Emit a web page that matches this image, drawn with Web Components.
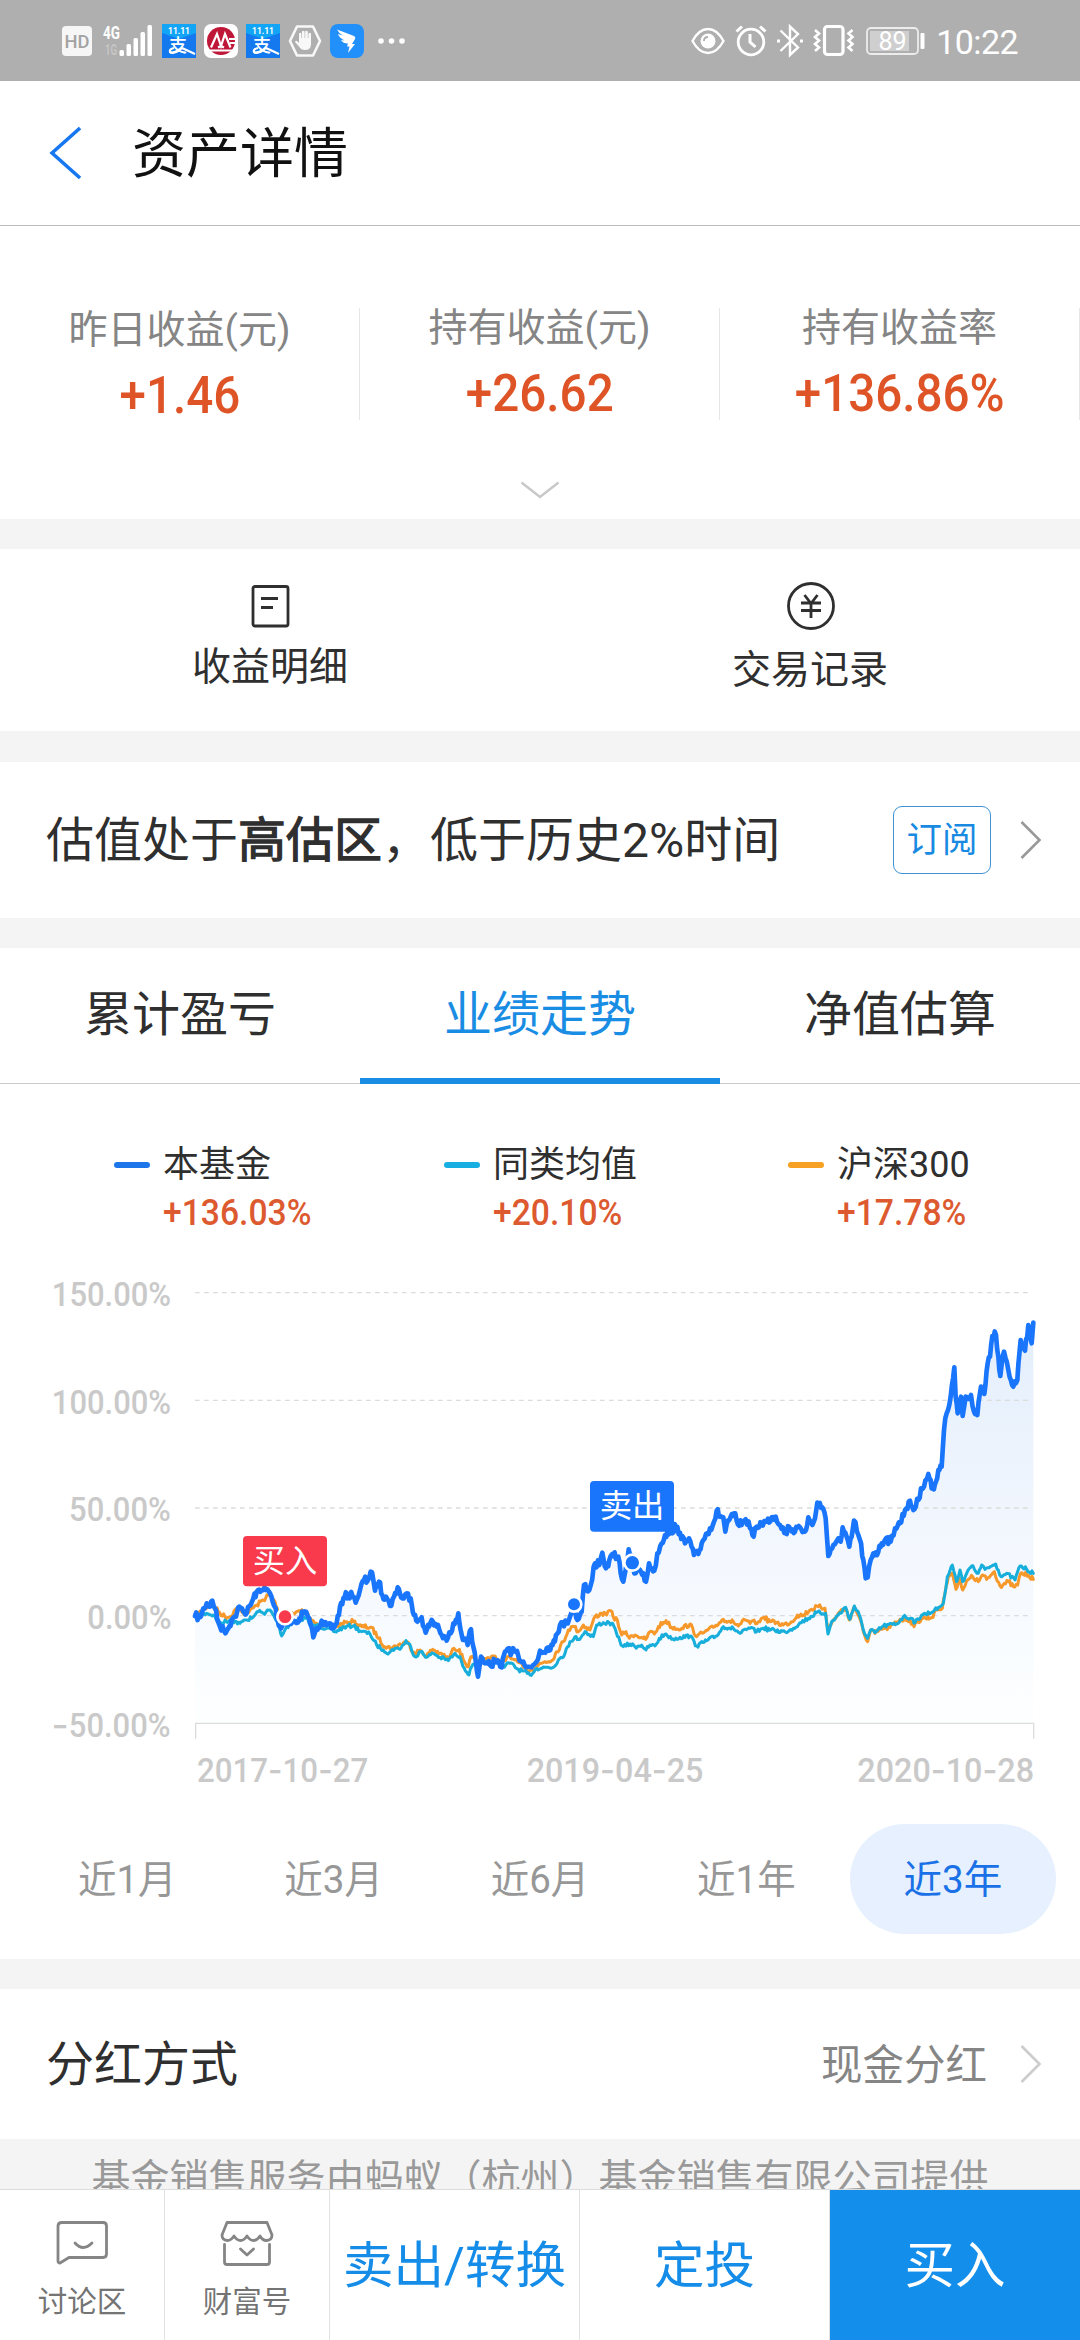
<!DOCTYPE html>
<html lang="zh-CN">
<head>
<meta charset="utf-8">
<meta name="viewport" content="width=1080">
<title>资产详情</title>
<style>
  html, body { margin: 0; padding: 0; }
  body {
    width: 1080px;
    height: 2340px;
    overflow: hidden;
    background: #f4f4f4;
    color: #2f2f2f;
    font-family: Roboto, "Noto Sans CJK SC", sans-serif;
  }
</style>
</head>
<body>
<asset-page></asset-page>

<script>
/* ============================================================
   HELPER: define()
   ============================================================
   Registers a custom element whose markup never changes.
   The template is cloned into an open shadow root.
   ============================================================ */
function define(name, html) {
  const template = document.createElement('template');
  template.innerHTML = html;
  customElements.define(name, class extends HTMLElement {
    constructor() {
      super();
      this.attachShadow({ mode: 'open' });
      this.shadowRoot.appendChild(template.content.cloneNode(true));
    }
  });
}

/* ============================================================
   <status-bar> : phone status bar, icons left and right
   ============================================================ */
const payIcon = `
  <svg width="34" height="34" viewBox="0 0 34 34">
    <rect width="34" height="34" fill="#1478ee"/>
    <path d="M0 0h34v9L17 15 0 9z" fill="#12a5f5"/>
    <text x="17" y="9.500" font-size="8.500" font-weight="700" text-anchor="middle" fill="#fff">11.11</text>
    <text x="16" y="28" font-size="18" font-weight="500" text-anchor="middle" fill="#fff">支</text>
    <path d="M12 24q-5 1-4 4 4 3 12-4M20 24l13 6" fill="none" stroke="#fff" stroke-width="2.200"/>
  </svg>`;

define('status-bar', `
<style>
  :host {
    display: flex;
    justify-content: space-between;
    height: 81px;
    padding: 0 62px;
    background: #afafaf;
    color: #fff;
    box-sizing: border-box;
  }
  div { display: flex; align-items: center; }
  svg { display: block; flex-shrink: 0; }
  .left { gap: 8px; }
  .right { gap: 10px; }
  .time { font-size: 34px; line-height: 40px; letter-spacing: -.6px; margin: 2px 0 0 1px; }
</style>
<div class="left">
  <svg width="30" height="30" viewBox="0 0 30 30">
    <rect width="30" height="30" rx="4" fill="#f6f6f6"/>
    <text x="15" y="22" font-size="19" font-weight="500" text-anchor="middle" fill="#a3a3a3" textLength="25" lengthAdjust="spacingAndGlyphs">HD</text>
  </svg>
  <svg width="54" height="34" viewBox="0 0 54 34">
    <text x="3" y="15" font-size="18" font-weight="700" fill="#fff" textLength="17" lengthAdjust="spacingAndGlyphs">4G</text>
    <text x="5" y="31" font-size="14" font-weight="700" fill="#c6c6c6" textLength="12" lengthAdjust="spacingAndGlyphs">1G</text>
    <g fill="#fff">
      <rect x="19.500" y="26" width="4.500" height="6" rx="1.500"/>
      <rect x="26.500" y="20" width="4.500" height="12" rx="1.500"/>
      <rect x="33.500" y="14" width="4.500" height="18" rx="1.500"/>
      <rect x="40.500" y="8" width="4.500" height="24" rx="1.500"/>
      <rect x="47.500" y="1" width="4.500" height="31" rx="1.500"/>
    </g>
  </svg>
  ${payIcon}
  <svg width="34" height="34" viewBox="0 0 34 34">
    <rect width="34" height="34" rx="7" fill="#fff"/>
    <circle cx="17" cy="17" r="14" fill="#bf1737"/>
    <path d="M7 23.500 13 10l4 12 4-12 5.500 13.500M17 22l-3 1.500M17 22l3 1.500M5 26.500h24" fill="none" stroke="#fff" stroke-width="2.200"/>
    <path d="M25 15h7M26 19h6" stroke="#fff" stroke-width="1.800"/>
  </svg>
  ${payIcon}
  <svg width="34" height="34" viewBox="0 0 34 34">
    <path d="M9 2.500h16L32 17l-7 14.500H9L2 17z" fill="none" stroke="#f8f8f8" stroke-width="2.600" stroke-linejoin="round"/>
    <path d="M11 15V9.500q1.200-1.500 2.400 0V14h.6V7.500q1.300-1.500 2.600 0V14h.6V7.500q1.300-1.500 2.600 0V14h.6V9.500q1.300-1.500 2.600 0V20q0 6-6 6-4 0-6-3.500L7 18q.8-2 2.600-.6L11 19z" fill="#f8f8f8"/>
  </svg>
  <svg width="34" height="34" viewBox="0 0 34 34">
    <rect width="34" height="34" rx="8" fill="#2290fb"/>
    <path d="M7 5.500 24 12q2 1 1 3l-3 5h3l-7 9 1.500-6.500H17l1-3q-5 0-7-3.500l3.500.5Q9 13.500 8 10l5 1.500Q8.500 9 7 5.500z" fill="#fff"/>
  </svg>
  <svg width="36" height="34" viewBox="0 0 36 34" fill="#fff">
    <circle cx="9" cy="17" r="2.800"/><circle cx="19.500" cy="17" r="2.800"/><circle cx="30" cy="17" r="2.800"/>
  </svg>
</div>
<div class="right">
  <svg width="34" height="34" viewBox="0 0 34 34">
    <path d="M1.500 17Q8 5 17 5t15.500 12Q26 29 17 29T1.500 17z" fill="none" stroke="#fff" stroke-width="2.400"/>
    <circle cx="17" cy="17" r="7.500" fill="#fff"/>
    <path d="M13 17q0-4 4-4" fill="none" stroke="#afafaf" stroke-width="1.800"/>
  </svg>
  <svg width="32" height="34" viewBox="0 0 32 34" fill="none" stroke="#fff">
    <circle cx="16" cy="18" r="12.800" stroke-width="2.800"/>
    <path d="M15 10v8l5.500 5" stroke-width="3"/>
    <path d="M1.500 7.500 7 2.500M30.500 7.500 25 2.500" stroke-width="3"/>
  </svg>
  <svg width="26" height="34" viewBox="0 0 26 34" fill="none" stroke="#fff" stroke-width="2.400">
    <path d="M3.500 6.500 21 23.500l-8 7.500V2.500l8 7.500L3.500 27"/>
    <path d="M0 17h3M23 17h3" stroke-width="3"/>
  </svg>
  <svg width="42" height="34" viewBox="0 0 42 34" fill="none" stroke="#fff">
    <rect x="11.500" y="2.500" width="18.500" height="28" rx="3" stroke-width="3.200"/>
    <path d="M2 6l4 3.500-4 3.500 4 3.500-4 3.500 4 3.500-4 3.500M39.500 6l-4 3.500 4 3.500-4 3.500 4 3.500-4 3.500 4 3.500" stroke-width="2.600"/>
  </svg>
  <svg width="60" height="34" viewBox="0 0 60 34">
    <rect x="2" y="4" width="51" height="26" rx="4" fill="none" stroke="#ececec" stroke-width="1.800"/>
    <rect x="5" y="7" width="39" height="20" fill="#cfcfcf"/>
    <rect x="55.500" y="9" width="4" height="16" rx="1" fill="#fff"/>
    <text x="27.500" y="25.500" font-size="25" text-anchor="middle" fill="#fff">89</text>
  </svg>
  <span class="time">10:22</span>
</div>
`);

/* ============================================================
   <title-bar> : back arrow and page title
   ============================================================ */
define('title-bar', `
<style>
  :host {
    display: flex;
    align-items: center;
    gap: 51px;
    height: 145px;
    padding-left: 49px;
    border-bottom: 1px solid #bbb;
    background: #fff;
    box-sizing: border-box;
  }
  span { font-size: 54px; line-height: 60px; color: #111; padding-top: 3px; }
</style>
<svg width="32" height="54" viewBox="0 0 32 54" fill="none" stroke="#1677f0" stroke-width="3.500">
  <path d="M31 2 3 27l28 25"/>
</svg>
<span><slot></slot></span>
`);

/* ============================================================
   <stat-cell> : label and orange number
   ============================================================ */
define('stat-cell', `
<style>
  :host {
    display: flex;
    flex-direction: column;
    align-items: center;
    height: 112px;
    border-right: 1px solid #e6e6e6;
    box-sizing: border-box;
  }
  .label { font-size: 39px; line-height: 40px; color: #858585; padding-top: var(--shift, 0px); }
  .value {
    font-size: 52px;
    line-height: 60px;
    font-weight: 500;
    color: #de5426;
    margin-top: 16px;
    transform: scaleX(.915);
  }
</style>
<span class="label"><slot name="label"></slot></span>
<span class="value"><slot></slot></span>
`);

/* ============================================================
   <entry-link> : icon over a caption
   ============================================================ */
define('entry-link', `
<style>
  :host { display: flex; flex-direction: column; align-items: center; color: #2f2f2f; }
  span { font-size: 39px; line-height: 46px; }
</style>
<slot name="icon"></slot>
<span><slot></slot></span>
`);

/* ============================================================
   <arrow-right> : chevron at the end of a row
   ============================================================ */
define('arrow-right', `
<style>
  :host { display: block; width: 22px; height: 40px; color: #999; }
  svg { display: block; }
</style>
<svg width="22" height="40" viewBox="0 0 22 40" fill="none" stroke="currentColor" stroke-width="2.600">
  <path d="M1.500 2 19.500 20 1.500 38"/>
</svg>
`);

/* ============================================================
   <tab-item> : attribute "active" adds colour and underline
   ============================================================ */
define('tab-item', `
<style>
  :host {
    display: flex;
    justify-content: center;
    height: 136px;
    font-size: 48px;
    line-height: 134px;
    border-bottom: 6px solid transparent;
    box-sizing: border-box;
  }
  :host([active]) { color: #198ce3; border-color: #198ce3; }
</style>
<slot></slot>
`);

/* ============================================================
   <legend-item> : --mark sets the colour of the dash
   ============================================================ */
define('legend-item', `
<style>
  :host { display: grid; grid-template-columns: 49px auto; align-items: center; justify-content: start; }
  i { width: 36px; height: 6px; border-radius: 3px; background: var(--mark); }
  .name { font-size: 36px; line-height: 48px; color: #2f2f2f; }
  .value {
    grid-column: 2;
    font-size: 36px;
    line-height: 48px;
    font-weight: 500;
    color: #dd5a30;
    transform: scaleX(.935);
    transform-origin: left;
    justify-self: start;
  }
</style>
<i></i><span class="name"><slot></slot></span>
<span class="value"><slot name="value"></slot></span>
`);

/* ============================================================
   <trend-chart> : performance lines with buy / sell tags
   ============================================================
   Points are "x,y" pairs in chart units, three units per pixel.
   ============================================================ */
const FUND = '45,1008 60,1012 70,985 80,970 90,980 97,962 105,985 112,1020 120,1040 132,1052 145,1045 155,1020 168,1010 178,980 190,995 200,1000 212,975 220,955 230,935 245,930 258,930 270,940 278,965 287,985 293,1020 303,1045 315,1020 330,1030 345,1025 358,1015 370,1000 383,1008 392,1035 400,1072 408,1045 425,1022 440,1035 455,1045 470,1030 480,980 490,955 505,942 518,950 527,968 540,930 552,900 563,902 572,875 580,900 585,932 597,905 607,945 618,950 630,978 642,950 653,922 667,955 680,940 692,955 702,1005 712,1025 725,1012 737,1058 755,1020 770,1040 785,1065 800,1082 812,1060 820,1030 835,1000 842,1050 852,1080 863,1095 873,1048 880,1100 888,1150 894,1190 903,1130 915,1150 930,1155 945,1142 965,1162 975,1115 985,1105 992,1125 1003,1112 1015,1128 1030,1145 1055,1162 1070,1145 1080,1112 1100,1105 1118,1095 1128,1065 1140,1035 1160,1030 1170,1010 1182,975 1192,1020 1205,995 1212,915 1228,930 1245,850 1258,855 1267,818 1278,865 1288,840 1300,828 1315,830 1322,880 1330,905 1340,850 1346,808 1357,848 1363,880 1380,870 1390,880 1398,905 1407,850 1423,872 1432,820 1445,790 1455,765 1470,755 1488,740 1500,758 1515,790 1527,775 1542,825 1555,822 1565,790 1578,762 1590,745 1602,725 1610,692 1620,710 1630,712 1636,755 1648,720 1662,700 1670,722 1685,735 1697,718 1710,745 1721,770 1730,740 1745,730 1760,725 1775,712 1787,710 1800,735 1817,760 1827,740 1845,755 1860,742 1875,755 1885,712 1897,735 1905,715 1912,668 1927,682 1937,715 1945,828 1960,795 1972,780 1982,785 1988,742 2000,770 2008,800 2015,770 2022,722 2035,765 2040,780 2050,840 2057,895 2063,892 2072,840 2080,820 2095,815 2105,790 2118,775 2132,785 2145,745 2160,730 2175,690 2190,662 2200,690 2215,660 2223,625 2232,620 2245,582 2255,625 2265,612 2275,570 2285,560 2292,450 2300,400 2312,350 2323,262 2327,350 2333,400 2343,350 2348,408 2357,350 2373,345 2382,395 2392,405 2403,320 2413,342 2423,250 2430,230 2437,168 2448,165 2455,230 2461,288 2472,215 2485,270 2500,320 2512,300 2522,180 2535,212 2545,135 2555,190 2560,128';
const INDEX = '45,1010 75,985 97,970 115,995 135,1010 150,1010 170,985 190,1000 210,990 230,975 250,960 265,945 285,965 295,1000 303,1040 325,1005 345,1000 358,992 380,1000 395,1025 410,1030 440,1035 470,1040 500,1025 520,1025 545,1040 575,1042 595,1075 615,1100 635,1105 655,1095 680,1085 705,1120 720,1110 740,1128 758,1108 780,1120 805,1135 822,1105 838,1108 850,1140 865,1160 873,1130 890,1150 920,1135 942,1128 965,1155 985,1130 1005,1140 1030,1162 1050,1172 1075,1155 1095,1145 1115,1142 1130,1115 1150,1085 1165,1050 1182,1040 1195,1055 1210,1035 1230,1050 1245,1010 1265,1000 1280,1005 1292,992 1300,1012 1312,1020 1325,1065 1338,1055 1348,1075 1365,1065 1385,1072 1397,1078 1410,1055 1423,1062 1435,1040 1458,1022 1475,1042 1505,1045 1530,1032 1550,1070 1575,1055 1600,1042 1630,1018 1660,1025 1675,1038 1695,1020 1710,1030 1735,1025 1752,1012 1770,1025 1790,1028 1810,1035 1835,1025 1852,1005 1870,1005 1890,990 1915,980 1935,985 1944,1050 1960,1020 1980,995 1997,985 2008,1020 2023,980 2037,1010 2050,1055 2063,1085 2072,1050 2085,1060 2105,1048 2130,1042 2160,1018 2190,1020 2202,1040 2225,1015 2255,1012 2270,990 2287,985 2298,920 2305,890 2317,880 2328,928 2338,895 2348,930 2363,900 2378,890 2395,905 2407,885 2420,898 2443,875 2460,918 2485,905 2500,920 2513,915 2522,880 2545,885 2560,898';
const PEERS = '45,1010 80,1000 100,1005 120,1030 150,1020 180,1030 195,1020 215,1015 235,995 250,1000 270,990 285,1015 295,1030 305,1068 320,1040 345,1025 375,1015 400,1035 440,1045 465,1055 500,1038 520,1038 545,1055 570,1062 590,1095 610,1110 628,1118 645,1105 660,1108 678,1082 692,1100 705,1130 722,1115 740,1132 760,1120 780,1132 805,1142 825,1120 840,1130 853,1165 867,1185 875,1160 895,1150 940,1145 965,1160 990,1150 1015,1168 1050,1185 1070,1165 1095,1162 1120,1162 1135,1140 1155,1120 1170,1085 1185,1070 1195,1078 1215,1055 1240,1070 1250,1035 1270,1028 1295,1030 1305,1045 1320,1085 1330,1100 1350,1092 1365,1100 1385,1095 1398,1110 1410,1095 1425,1098 1438,1075 1458,1062 1475,1078 1500,1072 1530,1068 1550,1098 1580,1082 1610,1068 1630,1040 1660,1045 1680,1060 1710,1045 1730,1055 1750,1045 1785,1052 1815,1055 1840,1045 1860,1028 1885,1015 1910,998 1937,1000 1944,1062 1955,1025 1975,1005 1997,982 2010,1018 2023,978 2038,1005 2050,1050 2063,1075 2072,1050 2085,1058 2110,1038 2150,1032 2170,1010 2195,1015 2205,1028 2225,1005 2260,995 2290,970 2302,890 2317,855 2330,905 2340,870 2348,905 2360,880 2375,858 2395,880 2405,855 2415,868 2447,852 2463,890 2480,880 2505,900 2520,858 2540,868 2560,880';

// Puts a small daily wobble between the given points
function daily(points, amp) {
  const p = points.split(' ').map(s => s.split(',').map(Number));
  let seed = 7, out = [p[0].join(',')];
  for (let i = 1; i < p.length; i++) {
    const [x0, y0] = p[i - 1], [x1, y1] = p[i];
    const n = Math.max(1, Math.round((x1 - x0) / 4));
    for (let k = 1; k <= n; k++) {
      seed = (seed * 16807) % 2147483647;
      const j = k < n ? (seed / 2147483647 - .5) * 2 * amp : 0;
      out.push((x0 + (x1 - x0) * k / n).toFixed(1) + ',' + (y0 + (y1 - y0) * k / n + j).toFixed(1));
    }
  }
  return out.join(' ');
}

class TrendChart extends HTMLElement {
  constructor() {
    super();
    this.attachShadow({ mode: 'open' });
  }

  connectedCallback() {
    const fund = daily(FUND, 12);
    // Thin hyphens get a wider glyph from Inter
    const wide = s => s.replace(/-/g, '<i>-</i>');
    const scale = ['150.00%', '100.00%', '50.00%', '0.00%', '-50.00%'];
    const dates = ['2017-10-27', '2019-04-25', '2020-10-28'];

    this.shadowRoot.innerHTML = `
<style>
  :host {
    display: grid;
    grid-template-columns: 171px 900px;
    column-gap: 9px;
    height: 540px;
    color: #c9c9c9;
    font-size: 34px;
    font-weight: 500;
  }
  i { font-family: Inter, sans-serif; font-style: normal; }
  .scale { display: flex; flex-direction: column; align-items: flex-end; padding-top: 1px; }
  .scale span { line-height: 107.600px; transform: scaleX(.91); transform-origin: right; }
  .scale i { display: inline-block; transform: scaleX(1.200); transform-origin: right; }
  .plot { display: flex; flex-direction: column; }
  svg { display: block; }
  .dates { display: flex; justify-content: space-between; width: 837px; padding-left: 17px; }
  .dates span { line-height: 40px; transform: scaleX(.95); }
  .dates span:first-child { transform: scaleX(.92); transform-origin: left; }
  .dates span:last-child { transform-origin: right; }
</style>
<div class="scale">${scale.map(s => `<span>${wide(s)}</span>`).join('')}</div>
<div class="plot">
  <svg width="900" height="510" viewBox="0 -120 2700 1530">
    <defs>
      <linearGradient id="fill" gradientUnits="userSpaceOnUse" x1="0" y1="128" x2="0" y2="1330">
        <stop offset="0" stop-color="#e3eefb"/>
        <stop offset=".55" stop-color="#f3f7fe"/>
        <stop offset="1" stop-color="#fdffff"/>
      </linearGradient>
    </defs>
    <polygon points="45,1330 ${fund} 2560,1330" fill="url(#fill)"/>
    <path d="M45 38H2553M45 361H2553M45 684H2553M45 1007H2553" stroke="#dcdcdc" stroke-width="4" stroke-dasharray="14 13"/>
    <path d="M47 1376V1330H2561V1376" fill="none" stroke="#dcdcdc" stroke-width="4"/>
    <g fill="none" stroke-linejoin="round" stroke-linecap="round">
      <polyline points="${daily(INDEX, 7)}" stroke="#f6982a" stroke-width="9"/>
      <polyline points="${daily(PEERS, 6)}" stroke="#17aedb" stroke-width="9"/>
      <polyline points="${fund}" stroke="#1975fb" stroke-width="14"/>
    </g>
    <g stroke="#fff" stroke-width="8">
      <circle cx="315" cy="1010" r="23" fill="#f9394c"/>
      <circle cx="1182" cy="973" r="22" fill="#1975fb"/>
      <circle cx="1357" cy="848" r="24" fill="#1975fb"/>
    </g>
    <rect x="189" y="768" width="252" height="151" rx="12" fill="#f9394c"/>
    <rect x="1230" y="603" width="252" height="152" rx="12" fill="#1975fb"/>
    <g fill="#fff" font-size="97" font-weight="400" text-anchor="middle">
      <text x="315" y="876">买入</text>
      <text x="1356" y="711">卖出</text>
    </g>
  </svg>
  <div class="dates">${dates.map(s => `<span>${wide(s)}</span>`).join('')}</div>
</div>`;
  }
}
customElements.define('trend-chart', TrendChart);

/* ============================================================
   <range-pill> : time range, attribute "active" fills it
   ============================================================ */
define('range-pill', `
<style>
  :host {
    display: block;
    flex: 1;
    height: 110px;
    line-height: 112px;
    text-align: center;
    border-radius: 55px;
    font-size: 38.5px;
    color: #979797;
  }
  :host([active]) { background: #e6f0fe; color: #1a70e6; }
</style>
<slot></slot>
`);

/* ============================================================
   <dock-icon> : small icon + label in the bottom bar
   ============================================================ */
define('dock-icon', `
<style>
  :host {
    display: flex;
    flex-direction: column;
    align-items: center;
    gap: 15px;
    padding-top: 29px;
    border-right: 1px solid #e2e2e2;
    box-sizing: border-box;
  }
  span { font-size: 29.5px; line-height: 40px; color: #747474; }
</style>
<slot name="icon"></slot>
<span><slot></slot></span>
`);

/* ============================================================
   <dock-button> : attribute "primary" makes it solid blue
   ============================================================ */
define('dock-button', `
<style>
  :host {
    display: block;
    height: 150px;
    text-align: center;
    font-size: 50.500px;
    line-height: 151px;
    color: #148ce8;
    border-right: 1px solid #e2e2e2;
    box-sizing: border-box;
  }
  :host([primary]) { background: #138eea; color: #fff; border: 0; }
</style>
<slot></slot>
`);

/* ============================================================
   <asset-page> : the whole screen, top to bottom
   ============================================================ */
define('asset-page', `
<style>
  :host { display: flex; flex-direction: column; width: 1080px; height: 2340px; overflow: hidden; }
  section { background: #fff; margin-bottom: 30px; flex-shrink: 0; box-sizing: border-box; }
  svg { display: block; }

  .stats { height: 293px; padding-top: 82px; }
  .cells { display: grid; grid-template-columns: repeat(3, 1fr); }
  .more { margin: 61px auto 0; }

  .entries { height: 182px; display: grid; grid-template-columns: 1fr 1fr; padding-top: 33px; }

  .row { display: flex; align-items: center; padding: 0 38px 0 46px; font-size: 48px; }
  .row > span { padding-bottom: 8px; }
  .valuation { height: 156px; margin-top: 1px; }
  .valuation b { font-weight: 400; -webkit-text-stroke: 1.300px; }
  .valuation button {
    width: 98px;
    height: 68px;
    margin: 0 29px 0 auto;
    padding: 0;
    border: 1.500px solid #3f93d2;
    border-radius: 9px;
    background: #fff;
    color: #198ae2;
    font: 35.500px/60px Roboto, "Noto Sans CJK SC", sans-serif;
  }

  .trend { height: 1011px; }
  nav { display: grid; grid-template-columns: repeat(3, 1fr); height: 136px; box-shadow: inset 0 -1px #ccc; }
  .legend { display: grid; grid-template-columns: 330px 344px auto; padding: 57px 0 0 114px; }
  .ranges { display: flex; padding: 0 24px; }

  .dividend { height: 150px; margin-bottom: 0; }
  .dividend em { margin: 0 33px 0 auto; padding-bottom: 5px; font-style: normal; font-size: 41.500px; color: #858585; }
  .dividend arrow-right { color: #ccc; }

  .notice {
    height: 51px;
    overflow: hidden;
    font-size: 39px;
    line-height: 81px;
    text-align: center;
    white-space: nowrap;
    color: #999;
  }
  footer {
    display: grid;
    grid-template-columns: 165px 165px 250px 250px 250px;
    height: 150px;
    flex-shrink: 0;
    background: #fff;
    box-shadow: 0 -1px #dcdcdc;
  }
</style>

<status-bar></status-bar>
<title-bar>资产详情</title-bar>

<section class="stats">
  <div class="cells">
    <stat-cell style="--shift: 2px"><span slot="label">昨日收益(元)</span>+1.46</stat-cell>
    <stat-cell><span slot="label">持有收益(元)</span>+26.62</stat-cell>
    <stat-cell><span slot="label">持有收益率</span>+136.86%</stat-cell>
  </div>
  <svg class="more" width="40" height="18" viewBox="0 0 40 18" fill="none" stroke="#c8c8c8" stroke-width="2.500">
    <path d="M1.500 1.500 20 16 38.500 1.500"/>
  </svg>
</section>

<section class="entries">
  <entry-link>
    <svg slot="icon" style="margin: 2px 0 16px" width="40" height="44" viewBox="0 0 40 44" fill="none" stroke="#2f2f2f" stroke-width="2.800">
      <rect x="3" y="2.500" width="35" height="39.500" rx="2"/>
      <path d="M11 14.500h17M11 23.500h12"/>
    </svg>
    收益明细
  </entry-link>
  <entry-link>
    <svg slot="icon" style="margin: 0 0 17px 2px" width="48" height="48" viewBox="0 0 48 48" fill="none" stroke="#2f2f2f" stroke-width="2.800">
      <circle cx="24" cy="24" r="22.500"/>
      <path d="M17.500 13 24 21.500 30.500 13M24 21.500V36M14 21h20M14 28.500h20"/>
    </svg>
    交易记录
  </entry-link>
</section>

<section class="row valuation">
  <span>估值处于<b>高估区</b>，低于历史2%时间</span>
  <button>订阅</button>
  <arrow-right></arrow-right>
</section>

<section class="trend">
  <nav>
    <tab-item>累计盈亏</tab-item>
    <tab-item active>业绩走势</tab-item>
    <tab-item>净值估算</tab-item>
  </nav>
  <div class="legend">
    <legend-item style="--mark: #1c76ea">本基金<span slot="value">+136.03%</span></legend-item>
    <legend-item style="--mark: #17aee2">同类均值<span slot="value">+20.10%</span></legend-item>
    <legend-item style="--mark: #f6a024">沪深300<span slot="value">+17.78%</span></legend-item>
  </div>
  <trend-chart style="margin-top: 3px; margin-bottom: 44px"></trend-chart>
  <div class="ranges">
    <range-pill>近1月</range-pill>
    <range-pill>近3月</range-pill>
    <range-pill>近6月</range-pill>
    <range-pill>近1年</range-pill>
    <range-pill active>近3年</range-pill>
  </div>
</section>

<section class="row dividend">
  <span>分红方式</span>
  <em>现金分红</em>
  <arrow-right></arrow-right>
</section>

<div class="notice">基金销售服务由蚂蚁（杭州）基金销售有限公司提供</div>

<footer>
  <dock-icon>
    <svg slot="icon" width="54" height="48" viewBox="0 0 54 48" fill="none" stroke="#858585" stroke-width="2.800" stroke-linejoin="round">
      <path d="M7 3.500h41q3.500 0 3.500 3.500v28q0 3.500-3.500 3.500H14L5 44q-2 0-2-2V7q0-3.500 4-3.500z"/>
      <path d="M20 24q8 9 17 0" stroke-linecap="round"/>
    </svg>
    讨论区
  </dock-icon>
  <dock-icon>
    <svg slot="icon" width="56" height="48" viewBox="0 0 56 48" fill="none" stroke="#858585" stroke-width="2.800" stroke-linejoin="round" stroke-linecap="round">
      <path d="M8 3.500h40L53 16q0 5-5.500 5.500-4 0-6.500-4.500-3 4.500-6.500 4.500T28 17q-3 4.500-6.500 4.500T15 17q-3 4.500-6.500 4.500Q3 21 3 16z"/>
      <path d="M5.500 25.500V43q0 2.500 2.500 2.500h40q2.500 0 2.500-2.500V25.500M21.500 30l6.500 6 6.500-6"/>
    </svg>
    财富号
  </dock-icon>
  <dock-button>卖出/转换</dock-button>
  <dock-button>定投</dock-button>
  <dock-button primary>买入</dock-button>
</footer>
`);
</script>
</body>
</html>
